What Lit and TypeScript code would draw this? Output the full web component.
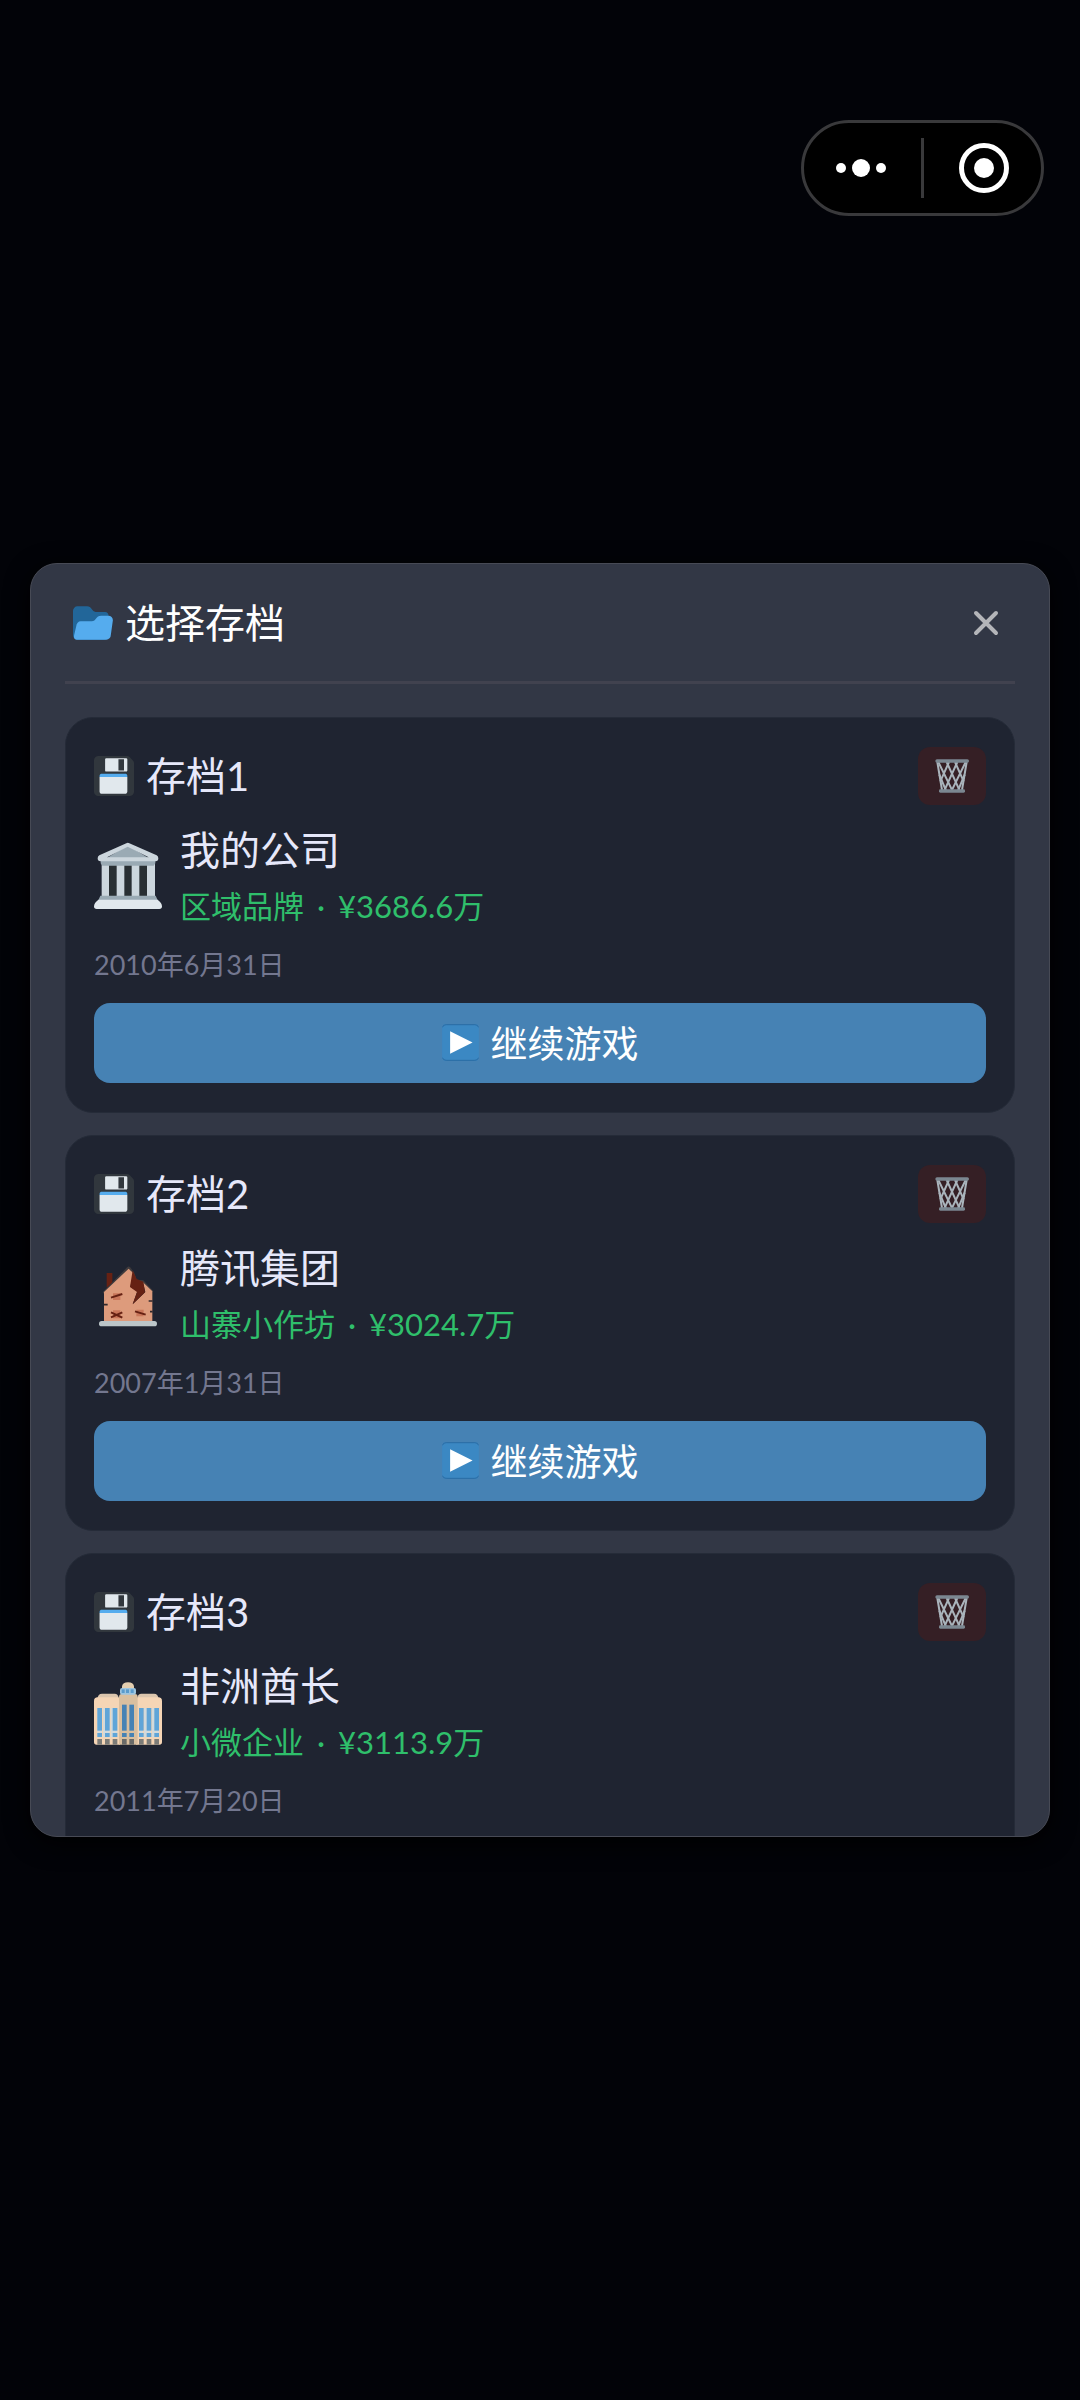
import { LitElement, css, html, svg, type TemplateResult } from "lit";
import { customElement, property, state } from "lit/decorators.js";

interface Save {
  id: number;
  company: string;
  level: string;
  cash: string;
  date: string;
  building: "museum" | "derelict" | "department";
}

const SAVES: Save[] = [
  { id: 1, company: "我的公司", level: "区域品牌", cash: "¥3686.6万", date: "2010年6月31日", building: "museum" },
  { id: 2, company: "腾讯集团", level: "山寨小作坊", cash: "¥3024.7万", date: "2007年1月31日", building: "derelict" },
  { id: 3, company: "非洲酋长", level: "小微企业", cash: "¥3113.9万", date: "2011年7月20日", building: "department" },
];

const folderIcon = html`<svg class="icon" viewBox="0 0 36 36" aria-hidden="true">
  <path fill="#269" d="M0 29a4 4 0 0 0 4 4h24a4 4 0 0 0 4-4V11a3.500 3.500 0 0 0-3-3h-8.500c-3.600 0-3.500-5-7.900-5H4a4 4 0 0 0-4 4z"/>
  <path fill="#55acee" d="M35.900 15.500a4 4 0 0 0-4-4h-6.500c-5 0-4.400 5-8.500 5H7a4 4 0 0 0-4 4l-2 8.500c-.6 3 .8 4 3 4h26a4 4 0 0 0 4-4z"/>
</svg>`;

const diskIcon = html`<svg class="icon" viewBox="0 0 36 36" aria-hidden="true">
  <path fill="#31373d" d="M4 36s-4 0-4-4V4s0-4 4-4h26c1 0 2 1 2 1l3 3s1 1 1 2v26s0 4-4 4z"/>
  <path fill="#55acee" d="M5 19v-1s0-2 2-2h21c2 0 2 2 2 2v1z"/>
  <path fill="#e1e8ed" d="M5 32V19h25v13s0 2-2 2H7c-2 0-2-2-2-2zM10 3s0-1 1-1h18c1 0 1 1 1 1v10s0 1-1 1H11s-1 0-1-1zm12 10h5V3h-5z"/>
</svg>`;

const playIcon = html`<svg class="icon play" viewBox="0 0 111 112" aria-hidden="true">
  <rect width="111" height="112" rx="12" fill="#3b88c3"/>
  <path fill="none" stroke="#2a6ba3" stroke-width="3" d="M1 10Q3 2 12 2H99Q108 2 110 10M1 102Q3 110 12 110H99Q108 110 110 102"/>
  <path fill="#fff" d="M24 22L92 56 24 90z"/>
</svg>`;

const trashIcon = html`<svg class="icon trash" viewBox="162 627 102 102" aria-hidden="true">
  <g fill="none" stroke="#aab4bc" stroke-width="6">
    <path d="M169 636L183 720M257 636L243 720"/>
    <path d="M172 636L214 722M197 636L236 722M222 636L248 694M175 674L195 722"/>
    <path d="M254 636L212 722M229 636L190 722M204 636L178 694M251 674L231 722"/>
  </g>
  <rect x="163" y="628" width="101" height="10" rx="5" fill="#7b8791"/>
  <rect x="174" y="718" width="78" height="10" rx="4" fill="#7b8791"/>
</svg>`;

const bar = (x: number, y: number, w: number, h: number, fill: string) =>
  svg`<rect x=${x} y=${y} width=${w} height=${h} fill=${fill}></rect>`;

const BUILDINGS: Record<Save["building"], TemplateResult> = {
  museum: html`<svg class="building" viewBox="102 90 204 204" aria-hidden="true">
    <path fill="#ccd6dd" d="M125 155h160v105H125z"/>
    <path fill="#292f33" d="M147 162h23v93h-23zM193 162h22v93h-22zM238 162h23v93h-23z"/>
    <path fill="#9aaab4" d="M122 148h164v9l-5 7H127l-5-7zM121 254h166l6 14H115z"/>
    <path fill="#9aaab4" d="M203 103l66 40H137z"/>
    <path fill="#ccd6dd" fill-rule="evenodd" d="M199 97q4-3 9 0l82 36q5 3 5 9 0 9-8 9H121q-8 0-8-9 0-6 5-9zM203 107l-62 32h125z"/>
    <path fill="#e1e8ed" d="M115 266h178q13 10 13 20 0 8-8 8H110q-8 0-8-8 0-10 13-20z"/>
  </svg>`,
  derelict: html`<svg class="building" viewBox="42 54 204 204" aria-hidden="true">
    <path fill="#662113" d="M80 96h17v30l-17 14z"/>
    <path fill="#3e3a3c" d="M68 154l74-76q4-3 8 0l12 16 8 22 20 2 30 32-2 4-42-30-30-34-74 69z"/>
    <path fill="#dd9b7c" d="M72 244v-91l74-70 14 14-9 40 21 14-14 39 38-37-7-29 28 27v93z"/>
    <path fill="#662113" d="M158 88l12 26 20 8 5 32-37 36 13-37-21-15z"/>
    <path fill="#c1694f" d="M99 157h22v20H99zM99 208h22v24H99zM169 206h22v20h-22z" opacity=".75"/>
    <path fill="none" stroke="#662113" stroke-width="6" d="M93 170l34-11M93 214l34 16M93 229l34-15M165 211l32 10"/>
    <path fill="none" stroke="#31292c" stroke-width="5" d="M71 191h12M206 180h12M210 212h8"/>
    <rect x="57" y="240" width="174" height="16" rx="8" fill="#bcc6c9"/>
  </svg>`,
  department: html`<svg class="building" viewBox="102 414 204 204" aria-hidden="true">
    <path fill="#dbc5ad" d="M112 480q2-16 14-16h38q10 0 12 12h56q2-12 12-12h38q12 0 14 16z"/>
    <path fill="#f5d5b5" d="M102 486q0-11 11-11h59q8 0 8 11v131h-70q-8 0-8-8zM228 486q0-11 8-11h59q11 0 11 11v123q0 8-8 8h-70z"/>
    <path fill="#d9bf9f" d="M177 474q0-9 8-9h40q8 0 8 9v143h-56z"/>
    <path fill="#e3ceb0" d="M186 448v-6q2-12 18-12t18 12v6z"/>
    <rect x="180" y="447" width="48" height="20" rx="6" fill="#9ec5df"/>
    ${[185, 198, 212].map((x) => bar(x, 451, 9, 11, "#5a9bcc"))}
    <path fill="#d3dadb" d="M112 507h60v88h-60zM237 507h60v88h-60z"/>
    <path fill="#f5d5b5" d="M126 507h3v88h-3zM149 507h3v88h-3zM249 507h3v88h-3zM273 507h3v88h-3z"/>
    ${[112, 135, 158, 237, 260, 283].map((x) => [
      bar(x, 507, 14, 68, "#5fa5d8"),
      bar(x, 582, 14, 12, "#5fa5d8"),
      bar(x, 600, 14, 17, "#7c7c78"),
    ])}
    ${[186, 208].map((x) => [
      bar(x, 497, 14, 78, "#4682b4"),
      bar(x, 582, 14, 12, "#4682b4"),
      bar(x, 600, 14, 17, "#696a68"),
    ])}
  </svg>`,
};

const base = css`
  * {
    box-sizing: border-box;
  }
  button {
    margin: 0;
    padding: 0;
    border: 0;
    background: none;
    color: inherit;
    font: inherit;
    cursor: pointer;
  }
  h1,
  h2,
  h3,
  p {
    margin: 0;
    font-weight: 400;
  }
  svg {
    display: block;
    flex: none;
  }
`;

@customElement("save-card")
class SaveCard extends LitElement {
  static styles = [
    base,
    css`
      :host {
        display: flex;
        flex-direction: column;
        flex: none;
        gap: 18px;
        box-sizing: border-box;
        padding: 29px 28px;
        border: 1px solid #252b38;
        border-radius: 28px;
        background: #1f2431;
        color: #e6e8fa;
      }
      .head {
        display: flex;
        align-items: center;
        justify-content: space-between;
      }
      .slot {
        display: flex;
        align-items: center;
        gap: 12px;
        font-size: 40px;
        line-height: 52px;
      }
      .icon {
        width: 40px;
        height: 40px;
      }
      .delete {
        display: grid;
        place-items: center;
        width: 68px;
        height: 58px;
        border-radius: 12px;
        background: #351f25;
      }
      .trash {
        width: 34px;
        height: 34px;
      }
      .company {
        display: flex;
        align-items: center;
        gap: 18px;
      }
      .building {
        width: 68px;
        height: 68px;
      }
      .about {
        display: flex;
        flex-direction: column;
        gap: 8px;
      }
      .name {
        font-size: 40px;
        line-height: 54px;
      }
      .level {
        display: flex;
        gap: 13px;
        font-size: 31px;
        line-height: 42px;
        color: #2fbf6b;
      }
      .date {
        font-size: 27px;
        line-height: 40px;
        color: #73778f;
      }
      .resume {
        display: flex;
        align-items: center;
        justify-content: center;
        gap: 12px;
        height: 80px;
        padding-bottom: 2px;
        border-radius: 16px;
        background: #4682b4;
        color: #fff;
        font-size: 37px;
      }
      .play {
        width: 37px;
        height: 37px;
      }
    `,
  ];

  @property({ attribute: false }) save!: Save;

  private remove() {
    this.dispatchEvent(new CustomEvent("remove-save", { detail: this.save.id }));
  }

  render() {
    const s = this.save;
    return html`
      <div class="head">
        <h2 class="slot">${diskIcon}<span>存档${s.id}</span></h2>
        <button class="delete" aria-label="删除存档${s.id}" @click=${this.remove}>${trashIcon}</button>
      </div>
      <div class="company">
        ${BUILDINGS[s.building]}
        <div class="about">
          <h3 class="name">${s.company}</h3>
          <p class="level"><span>${s.level}</span><span>·</span><span>${s.cash}</span></p>
        </div>
      </div>
      <p class="date">${s.date}</p>
      <button class="resume">${playIcon}<span>继续游戏</span></button>
    `;
  }
}

@customElement("app-root")
class AppRoot extends LitElement {
  static styles = [
    base,
    css`
      :host {
        display: flex;
        flex-direction: column;
        justify-content: center;
        position: relative;
        box-sizing: border-box;
        min-height: 100vh;
        padding: 0 30px;
        background: #020308;
        color: #fff;
        font-family: Lato, "Noto Sans CJK SC", sans-serif;
      }
      .capsule {
        position: absolute;
        top: 120px;
        right: 36px;
        display: flex;
        align-items: center;
        border: 3px solid #39393b;
        border-radius: 48px;
        background: #000;
      }
      .capsule button {
        display: grid;
        place-items: center;
        width: 117px;
        height: 90px;
      }
      .capsule .more {
        padding-right: 3px;
      }
      .capsule .exit {
        padding-left: 3px;
      }
      .rule {
        width: 3px;
        height: 60px;
        background: #39393b;
      }
      .panel {
        display: flex;
        flex-direction: column;
        box-sizing: content-box;
        max-height: 53vh;
        overflow: hidden;
        border: 1px solid #474a55;
        border-radius: 27px;
        background: #323745;
        box-shadow: 0 6px 24px #000;
      }
      .header {
        display: flex;
        flex: none;
        align-items: center;
        justify-content: space-between;
        margin: 0 34px;
        padding: 33px 7px 32px 8px;
        border-bottom: 3px solid #41424f;
      }
      .title {
        display: flex;
        align-items: center;
        gap: 12px;
        font-size: 40px;
        line-height: 52px;
      }
      .icon {
        width: 40px;
        height: 40px;
      }
      .close {
        display: grid;
        place-items: center;
        width: 44px;
        height: 52px;
      }
      .list {
        display: flex;
        flex-direction: column;
        gap: 22px;
        min-height: 0;
        padding: 33px 34px 0;
        overflow-y: auto;
        scrollbar-width: none;
      }
    `,
  ];

  @state() private saves = SAVES;

  private removeSave(e: CustomEvent<number>) {
    this.saves = this.saves.filter((s) => s.id !== e.detail);
  }

  render() {
    return html`
      <nav class="capsule">
        <button class="more" aria-label="更多">
          <svg width="52" height="20" viewBox="0 0 52 20" fill="#fff">
            <circle cx="6" cy="10" r="5" /><circle cx="26" cy="10" r="9" /><circle cx="46" cy="10" r="5" />
          </svg>
        </button>
        <span class="rule"></span>
        <button class="exit" aria-label="关闭小程序">
          <svg width="50" height="50" viewBox="0 0 50 50">
            <circle cx="25" cy="25" r="22.500" fill="none" stroke="#fff" stroke-width="5" />
            <circle cx="25" cy="25" r="10" fill="#fff" />
          </svg>
        </button>
      </nav>
      <main class="panel">
        <header class="header">
          <h1 class="title">${folderIcon}<span>选择存档</span></h1>
          <button class="close" aria-label="关闭">
            <svg width="26" height="26" viewBox="0 0 26 26" stroke="#b4b5b9" stroke-width="4" stroke-linecap="round">
              <path d="M3 3L23 23M23 3L3 23" />
            </svg>
          </button>
        </header>
        <section class="list">
          ${this.saves.map((s) => html`<save-card .save=${s} @remove-save=${this.removeSave}></save-card>`)}
        </section>
      </main>
    `;
  }
}
